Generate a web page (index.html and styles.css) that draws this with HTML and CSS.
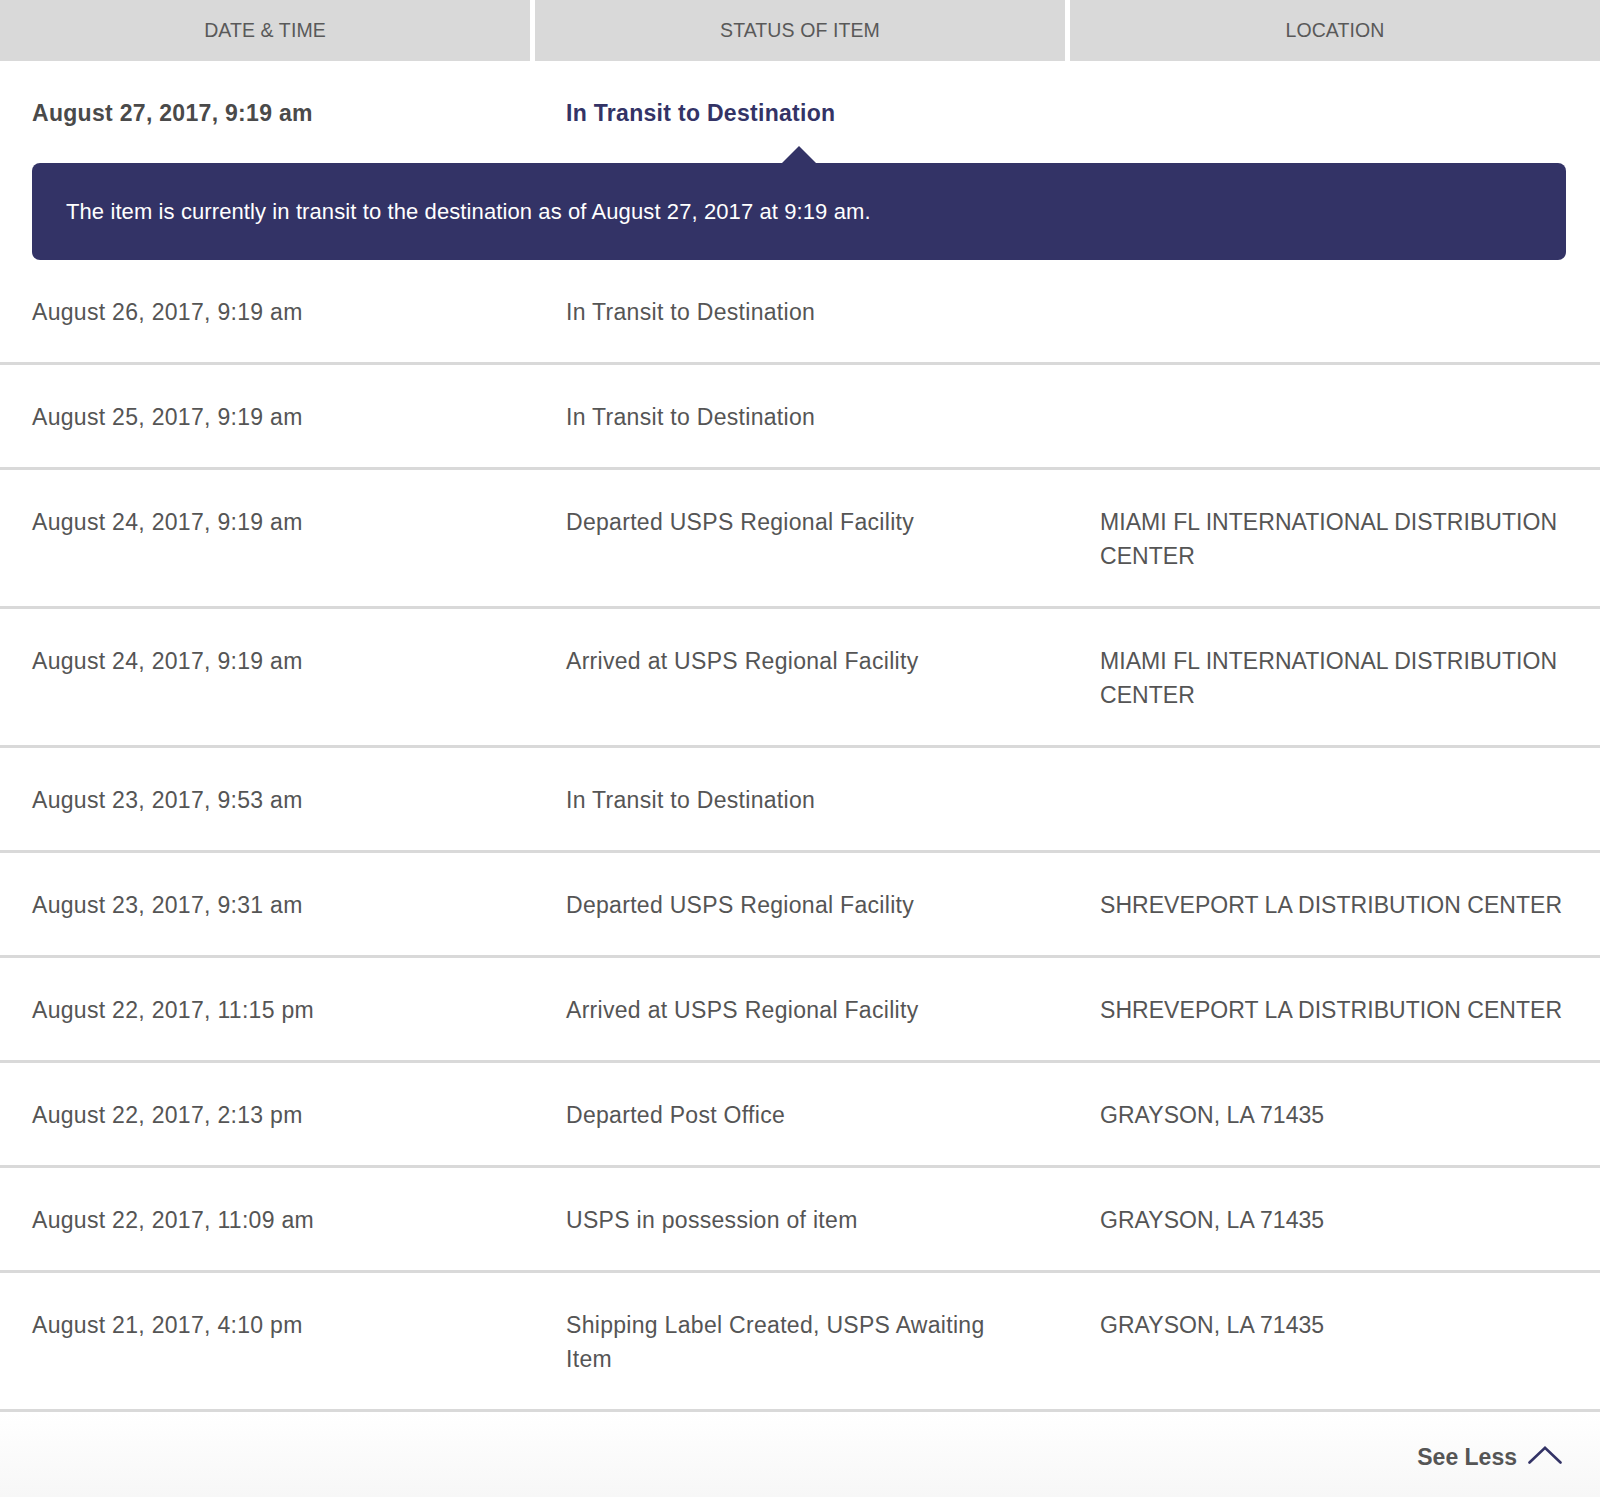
FILE: index.html
```html
<!DOCTYPE html>
<html lang="en">
<head>
<meta charset="utf-8">
<title>Tracking History</title>
<link rel="stylesheet" href="styles.css">
</head>
<body>
<div class="tracking">
  <div class="thead">
    <div class="th">DATE &amp; TIME</div>
    <div class="th">STATUS OF ITEM</div>
    <div class="th">LOCATION</div>
  </div>

  <div class="row row-current">
    <div class="cell date">August 27, 2017, 9:19 am</div>
    <div class="cell status">In Transit to Destination</div>
    <div class="cell loc"></div>
  </div>
  <div class="tip">
    <span class="tip-arrow"></span>
    The item is currently in transit to the destination as of August 27, 2017 at 9:19 am.
  </div>

  <div class="row">
    <div class="cell date">August 26, 2017, 9:19 am</div>
    <div class="cell status">In Transit to Destination</div>
    <div class="cell loc"></div>
  </div>
  <div class="row">
    <div class="cell date">August 25, 2017, 9:19 am</div>
    <div class="cell status">In Transit to Destination</div>
    <div class="cell loc"></div>
  </div>
  <div class="row">
    <div class="cell date">August 24, 2017, 9:19 am</div>
    <div class="cell status">Departed USPS Regional Facility</div>
    <div class="cell loc">MIAMI FL INTERNATIONAL DISTRIBUTION CENTER</div>
  </div>
  <div class="row">
    <div class="cell date">August 24, 2017, 9:19 am</div>
    <div class="cell status">Arrived at USPS Regional Facility</div>
    <div class="cell loc">MIAMI FL INTERNATIONAL DISTRIBUTION CENTER</div>
  </div>
  <div class="row">
    <div class="cell date">August 23, 2017, 9:53 am</div>
    <div class="cell status">In Transit to Destination</div>
    <div class="cell loc"></div>
  </div>
  <div class="row">
    <div class="cell date">August 23, 2017, 9:31 am</div>
    <div class="cell status">Departed USPS Regional Facility</div>
    <div class="cell loc">SHREVEPORT LA DISTRIBUTION CENTER</div>
  </div>
  <div class="row">
    <div class="cell date">August 22, 2017, 11:15 pm</div>
    <div class="cell status">Arrived at USPS Regional Facility</div>
    <div class="cell loc">SHREVEPORT LA DISTRIBUTION CENTER</div>
  </div>
  <div class="row">
    <div class="cell date">August 22, 2017, 2:13 pm</div>
    <div class="cell status">Departed Post Office</div>
    <div class="cell loc">GRAYSON, LA 71435</div>
  </div>
  <div class="row">
    <div class="cell date">August 22, 2017, 11:09 am</div>
    <div class="cell status">USPS in possession of item</div>
    <div class="cell loc">GRAYSON, LA 71435</div>
  </div>
  <div class="row">
    <div class="cell date">August 21, 2017, 4:10 pm</div>
    <div class="cell status">Shipping Label Created, USPS Awaiting Item</div>
    <div class="cell loc">GRAYSON, LA 71435</div>
  </div>

  <div class="footer">
    <a class="see-less" href="#">See Less
      <svg class="chev" width="34" height="18" viewBox="0 0 34 18" aria-hidden="true">
        <path d="M1.5 16.5 L17 1.8 L32.5 16.5" fill="none" stroke="#333366" stroke-width="2.6" stroke-linecap="round" stroke-linejoin="miter"/>
      </svg>
    </a>
  </div>
</div>
</body>
</html>
```

FILE: styles.css
```css
* { box-sizing: border-box; }

html, body {
  margin: 0;
  padding: 0;
  background: #ffffff;
}

body {
  font-family: "Liberation Sans", Arial, Helvetica, sans-serif;
  color: #555555;
}

.tracking {
  width: 1600px;
}

.thead {
  display: flex;
  gap: 5px;
  height: 61px;
}

.th {
  flex: 1;
  background: #d9d9d9;
  display: flex;
  align-items: center;
  justify-content: center;
  font-size: 19.5px;
  color: #595959;
  letter-spacing: 0.1px;
}

.row {
  display: grid;
  grid-template-columns: 534px 534px 1fr;
  border-bottom: 3px solid #d9d9d9;
}

.row-current {
  border-bottom: none;
}

.cell {
  padding: 35px 36px 33px 32px;
  font-size: 23px;
  line-height: 34px;
  letter-spacing: 0.3px;
}

.cell.status {
  padding-right: 62px;
}

.cell.loc {
  padding-right: 20px;
  letter-spacing: 0.05px;
}

.row-current .cell {
  font-weight: bold;
  color: #4a4a4a;
}

.row-current .status {
  color: #333366;
}

.tip {
  position: relative;
  margin: 0 34px 0 32px;
  padding: 31px 34px;
  background: #333366;
  border-radius: 8px;
  color: #ffffff;
  font-size: 22px;
  line-height: 35px;
  letter-spacing: 0.1px;
}

.tip-arrow {
  position: absolute;
  left: 50%;
  top: -17px;
  margin-left: -17px;
  width: 0;
  height: 0;
  border-left: 17px solid transparent;
  border-right: 17px solid transparent;
  border-bottom: 17px solid #333366;
}

.footer {
  height: 85px;
  display: flex;
  align-items: center;
  justify-content: flex-end;
  padding: 5px 38px 0 0;
  background: linear-gradient(#ffffff, #f7f7f7);
}

.see-less {
  display: flex;
  align-items: center;
  gap: 11px;
  font-size: 23px;
  font-weight: bold;
  color: #555555;
  text-decoration: none;
}

.chev {
  display: block;
  margin-top: -4px;
}
```
